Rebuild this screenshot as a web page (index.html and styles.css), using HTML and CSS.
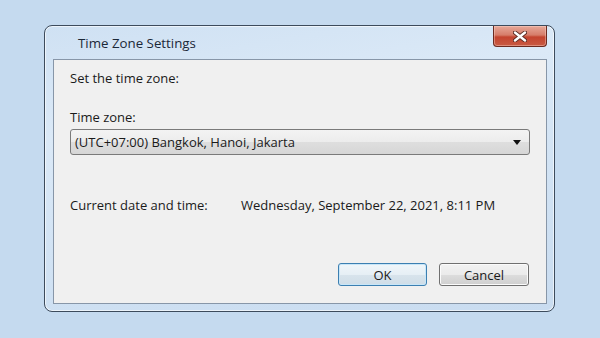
FILE: index.html
```html
<!DOCTYPE html>
<html lang="en">
<head>
    <meta charset="UTF-8">
    <title>Time Zone Settings</title>
    <link rel="stylesheet" href="styles.css">
</head>
<body>
    <div class="window">
        <div class="titlebar">
            <span class="title">Time Zone Settings</span>
            <button class="close" type="button" aria-label="Close">
                <svg width="14" height="11" viewBox="0 0 14 11">
                    <path d="M2 1.5 L12 9.5 M12 1.5 L2 9.5" stroke="#5a2a22" stroke-width="4.2" stroke-linecap="round"/>
                    <path d="M2 1.5 L12 9.5 M12 1.5 L2 9.5" stroke="#ffffff" stroke-width="2.4" stroke-linecap="round"/>
                </svg>
            </button>
        </div>

        <div class="client">
            <p class="intro">Set the time zone:</p>

            <label class="field-label" for="zone">Time zone:</label>
            <div class="combo" id="zone">
                <span>(UTC+07:00) Bangkok, Hanoi, Jakarta</span>
                <span class="arrow"></span>
            </div>

            <div class="current">
                <span class="current-label">Current date and time:</span>
                <span>Wednesday, September 22, 2021, 8:11 PM</span>
            </div>

            <div class="actions">
                <button class="btn btn-default" type="button">OK</button>
                <button class="btn btn-cancel" type="button">Cancel</button>
            </div>
        </div>
    </div>
</body>
</html>
```

FILE: styles.css
```css
/* Page */
body {
    margin: 0;
    width: 600px;
    height: 338px;
    background: #c5daef;
    font-family: 'Open Sans', 'Noto Sans', sans-serif;
    font-size: 13px;
    color: #1a1a1a;
    overflow: hidden;
}

/* Window frame */
.window {
    box-sizing: border-box;
    width: 511px;
    height: 287px;
    margin: 25px 0 0 44px;
    padding: 0 7px 7px 8px;
    border: 1px solid #3d4b5c;
    border-radius: 8px;
    background: linear-gradient(170deg, #cfe1f3 0%, #dbe9f7 30%, #d2e3f4 60%, #c9dcf0 100%);
    box-shadow: inset 0 0 0 1px rgba(255, 255, 255, 0.6);
    display: flex;
    flex-direction: column;
}

.titlebar {
    height: 33px;
    display: flex;
    justify-content: space-between;
    align-items: flex-start;
}

.title {
    margin: 8px 0 0 25px;
    font-size: 13.3px;
    color: #1b2838;
}

.close {
    width: 54px;
    height: 21px;
    padding: 0;
    border: 1px solid #6b2a20;
    border-top: none;
    border-radius: 0 0 4px 4px;
    background: linear-gradient(#e7a899 0%, #d67d6a 45%, #c4442f 55%, #c85a43 100%);
    box-shadow: inset 0 0 0 1px rgba(255, 220, 210, 0.4);
    display: flex;
    align-items: center;
    justify-content: center;
}

/* Client area */
.client {
    flex: 1;
    box-sizing: border-box;
    border: 1px solid #8796a8;
    background: #f0f0f0;
    padding: 9px 16px 17px 16px;
    display: flex;
    flex-direction: column;
}

.intro {
    margin: 0;
    line-height: 18px;
}

.field-label {
    margin-top: 21px;
    line-height: 18px;
}

.combo {
    box-sizing: border-box;
    height: 26px;
    margin-top: 3px;
    padding: 0 8px 0 4px;
    border: 1px solid #7a7a7a;
    border-radius: 3px;
    background: linear-gradient(#f3f3f3 0%, #ececec 50%, #dedede 51%, #d6d6d6 100%);
    display: flex;
    align-items: center;
    justify-content: space-between;
}

.arrow {
    width: 0;
    height: 0;
    border-left: 4px solid transparent;
    border-right: 4px solid transparent;
    border-top: 5px solid #111;
}

.current {
    margin-top: 41px;
    display: flex;
    line-height: 18px;
}

.current-label {
    width: 171px;
}

.actions {
    margin-top: auto;
    display: flex;
    justify-content: flex-end;
    gap: 12px;
    padding-right: 1px;
}

.btn {
    box-sizing: border-box;
    width: 89px;
    height: 23px;
    padding: 0;
    font: inherit;
    color: #1a1a1a;
    border: 1px solid #707070;
    border-radius: 3px;
    background: linear-gradient(#f2f2f2 0%, #ebebeb 50%, #dddddd 51%, #cfcfcf 100%);
    box-shadow: inset 0 0 0 1px #fbfbfb;
}

.btn-cancel {
    width: 90px;
}

.btn-default {
    border-color: #3c7fb1;
    box-shadow: inset 0 0 0 1px #c8e6f8;
    background: linear-gradient(#f0f6fa 0%, #e6eff5 50%, #d8e4ec 51%, #cfdde7 100%);
}
```
